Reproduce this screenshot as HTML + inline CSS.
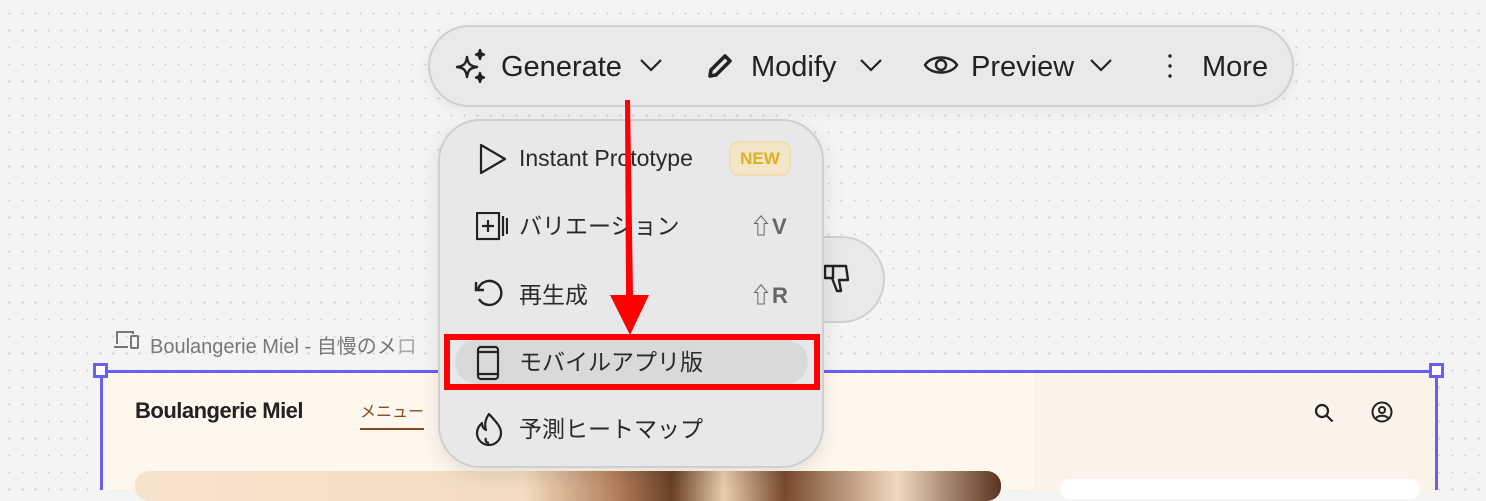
<!DOCTYPE html>
<html><head><meta charset="utf-8"><style>
*{margin:0;padding:0;box-sizing:border-box}
body{width:1486px;height:484px;overflow:hidden;position:relative;font-family:"Liberation Sans","Noto Sans CJK JP",sans-serif;background-color:#f4f4f5;background-image:radial-gradient(circle,#cdcdd1 0.9px,transparent 1.2px);background-size:13px 17px;background-position:3px 5px}
.abs{position:absolute}
.pill{left:428px;top:25px;width:866px;height:82px;border-radius:41px;background:#e9e9eb;border:2px solid #cfcfd2;box-shadow:0 4px 14px rgba(0,0,0,.06)}
.tb{font-size:29px;color:#222;top:51px}
.menu{left:438px;top:119px;width:386px;height:349px;border-radius:42px;background:#e8e8ea;border:2px solid #cfcfd2;box-shadow:0 6px 20px rgba(0,0,0,.1)}
.mi{font-size:23px;color:#2a2a2a;left:519px}
.sc{font-size:22px;font-weight:bold;color:#666;left:750px}
</style></head><body>
<div class="abs" style="left:700px;top:236px;width:185px;height:87px;border-radius:44px;background:#e9e9eb;border:2px solid #cfcfd2"></div>
<svg class="abs" style="left:822px;top:262px" width="36" height="34" viewBox="0 0 36 34" fill="none" stroke="#222" stroke-width="2.4" stroke-linejoin="round"><path d="M3 4h8v12H3z"/><path d="M11 4h13l2 14h-9l2 11h-4l-5-13"/></svg>
<div class="abs" style="left:100px;top:370px;width:1338px;height:120px;background:#fdf7ee;border:3px solid #6860f2;border-bottom:none"></div>
<div class="abs" style="left:1035px;top:373px;width:400px;height:120px;background:#faf3ea"></div>
<div class="abs" style="left:1060px;top:479px;width:360px;height:20px;background:#fff;border-radius:10px"></div>
<div class="abs" style="left:135px;top:471px;width:866px;height:30px;border-radius:14px;background:linear-gradient(90deg,#f6e3cc 0%,#f3dcc0 45%,#b88560 55%,#6b4025 62%,#e9cfae 68%,#7a4a2c 75%,#f0d9bf 88%,#5a3420 100%)"></div>
<div class="abs" style="left:93px;top:363px;width:15px;height:15px;background:#fff;border:3px solid #6860f2"></div>
<div class="abs" style="left:1429px;top:363px;width:15px;height:15px;background:#fff;border:3px solid #6860f2"></div>
<div class="abs" style="left:135px;top:398px;font-size:22px;font-weight:bold;color:#222;letter-spacing:-.5px">Boulangerie Miel</div>
<div class="abs" style="left:360px;top:398px;font-size:16px;color:#8a4a1c;padding-bottom:6px;border-bottom:2px solid #8a4a1c">メニュー</div>
<svg class="abs" style="left:1313px;top:402px" width="22" height="22" viewBox="0 0 22 22" fill="none" stroke="#222" stroke-width="2.2"><circle cx="9" cy="9" r="6"/><path d="M13.5 13.5l6 6"/></svg>
<svg class="abs" style="left:1371px;top:401px" width="22" height="22" viewBox="0 0 22 22" fill="none" stroke="#222" stroke-width="2"><circle cx="11" cy="11" r="9.5"/><circle cx="11" cy="9" r="3"/><path d="M5 17c3-3 9-3 12 0"/></svg>
<svg class="abs" style="left:113px;top:328px" width="28" height="24" viewBox="0 0 28 24" fill="none" stroke="#777" stroke-width="2"><path d="M4 16V4h16v2"/><path d="M1 19h14"/><rect x="18" y="8" width="7" height="12" rx="1"/></svg>
<div class="abs" style="left:150px;top:330px;font-size:20px;color:#777">Boulangerie Miel - 自慢のメ<span style="opacity:.6">ロ</span></div>
<div class="abs pill"></div>
<svg class="abs" style="left:454px;top:49px" width="34" height="34" viewBox="0 0 34 34" fill="none" stroke="#222" stroke-width="2.4" stroke-linejoin="round"><path d="M13 8c1 7 3 9 10 10-7 1-9 3-10 10-1-7-3-9-10-10 7-1 9-3 10-10z"/><path d="M26 1c.5 3 1.5 4 4 4.5-2.5.5-3.5 1.5-4 4.5-.5-3-1.5-4-4-4.5 2.5-.5 3.5-1.5 4-4.5z" fill="#222"/><path d="M26 24c.5 3 1.5 4 4 4.5-2.5.5-3.5 1.5-4 4.5-.5-3-1.5-4-4-4.5 2.5-.5 3.5-1.5 4-4.5z" fill="#222"/></svg>
<div class="abs tb" style="left:501px">Generate</div>
<svg class="abs" style="left:639px;top:58px" width="24" height="14" viewBox="0 0 24 14" fill="none" stroke="#222" stroke-width="2.2"><path d="M2 2l10 10 10-10"/></svg>
<svg class="abs" style="left:705px;top:51px" width="30" height="30" viewBox="0 0 30 30" fill="none" stroke="#222" stroke-width="3.6" stroke-linejoin="round"><path d="M5 25l1-6L20 5l5 5L11 24z"/></svg>
<div class="abs tb" style="left:751px">Modify</div>
<svg class="abs" style="left:859px;top:58px" width="24" height="14" viewBox="0 0 24 14" fill="none" stroke="#222" stroke-width="2.2"><path d="M2 2l10 10 10-10"/></svg>
<svg class="abs" style="left:923px;top:53px" width="36" height="24" viewBox="0 0 36 24" fill="none" stroke="#222" stroke-width="2.4"><path d="M2 12C8 2 28 2 34 12 28 22 8 22 2 12z"/><circle cx="18" cy="12" r="5"/></svg>
<div class="abs tb" style="left:971px">Preview</div>
<svg class="abs" style="left:1089px;top:58px" width="24" height="14" viewBox="0 0 24 14" fill="none" stroke="#222" stroke-width="2.2"><path d="M2 2l10 10 10-10"/></svg>
<svg class="abs" style="left:1167px;top:53px" width="6" height="26" viewBox="0 0 6 26" fill="#222"><circle cx="3" cy="3" r="1.7"/><circle cx="3" cy="13" r="1.7"/><circle cx="3" cy="23" r="1.7"/></svg>
<div class="abs tb" style="left:1202px">More</div>
<div class="abs menu"></div>
<svg class="abs" style="left:478px;top:143px" width="30" height="32" viewBox="0 0 30 32" fill="none" stroke="#222" stroke-width="2.2" stroke-linejoin="round"><path d="M3 2v28l24-14z"/></svg>
<div class="abs mi" style="top:145px">Instant Prototype</div>
<div class="abs" style="left:729px;top:141px;width:62px;height:35px;border-radius:10px;background:#f3e6c8;border:2px solid #f0dcae;color:#e0b020;font-size:17px;font-weight:bold;text-align:center;line-height:31px">NEW</div>
<svg class="abs" style="left:476px;top:212px" width="32" height="30" viewBox="0 0 32 30" fill="none" stroke="#222" stroke-width="2.2"><rect x="1" y="1" width="22" height="26"/><path d="M12 8v12M6 14h12"/><path d="M27 4v20M31 6v16"/></svg>
<div class="abs mi" style="top:207px">バリエーション</div>
<div class="abs sc" style="top:209px">⇧V</div>
<svg class="abs" style="left:472px;top:278px" width="32" height="32" viewBox="0 0 32 32" fill="none" stroke="#222" stroke-width="2.4"><path d="M6 11a12 12 0 1 1 1 10"/><path d="M4 4v8h8"/></svg>
<div class="abs mi" style="top:276px">再生成</div>
<div class="abs sc" style="top:278px">⇧R</div>
<div class="abs" style="left:455px;top:340px;width:353px;height:44px;border-radius:22px;background:#d9d9db"></div>
<svg class="abs" style="left:476px;top:345px" width="24" height="36" viewBox="0 0 24 36" fill="none" stroke="#222" stroke-width="2.2"><rect x="2" y="2" width="20" height="32" rx="3"/><path d="M2 7h20M2 29h20"/></svg>
<div class="abs mi" style="top:343px">モバイルアプリ版</div>
<svg class="abs" style="left:474px;top:412px" width="30" height="34" viewBox="0 0 30 34" fill="none" stroke="#222" stroke-width="2.2" stroke-linejoin="round"><path d="M15 2c6 7 12 12 12 19a12 12 0 0 1-24 0c0-5 3-8 5-10 0 4 2 6 4 7-2-6 0-12 3-16z"/><path d="M15 31c-3 0-4-3-3-5"/></svg>
<div class="abs mi" style="top:410px">予測ヒートマップ</div>
<div class="abs" style="left:444px;top:334px;width:376px;height:56px;border:6px solid #ff0000"></div>
<svg class="abs" style="left:600px;top:95px" width="60" height="245" viewBox="0 0 60 245"><path d="M25 5h5l3 195h16L30 240 10 200h16z" fill="#ff0000"/></svg>
</body></html>
